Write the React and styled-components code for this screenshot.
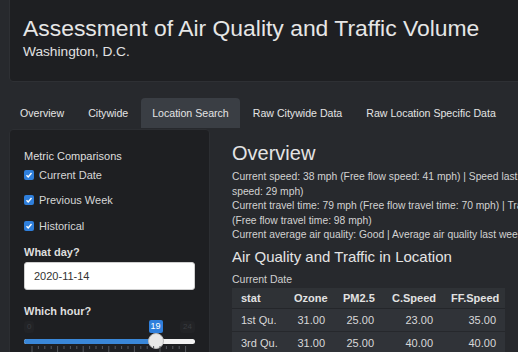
import styled, { createGlobalStyle } from "styled-components";

const GlobalStyle = createGlobalStyle`
  html, body {
    margin: 0;
    padding: 0;
    background: #27292d;
    overflow: hidden;
  }
  body {
    font-family: "Liberation Sans", Arial, sans-serif;
    color: #dcdcdc;
  }
`;

const Page = styled.div`
  width: 760px;
  padding: 0 0 0 9px;
  box-sizing: border-box;
`;

const Header = styled.header`
  margin-top: -4px;
  height: 86px;
  box-sizing: border-box;
  padding: 18px 13px 0;
  background: #1e1f22;
  border: 1px solid #2e3034;
  border-radius: 4px;
`;

const Title = styled.h1`
  margin: 0;
  font-size: 22.9px;
  font-weight: 400;
  line-height: 26px;
  color: #e6e6e6;
`;

const Subtitle = styled.div`
  margin-top: 3px;
  font-size: 13.7px;
  line-height: 16px;
  color: #e2e2e2;
`;

const Tabs = styled.nav`
  display: flex;
  margin-top: 16px;
  height: 30px;
`;

const Tab = styled.div`
  display: flex;
  align-items: center;
  padding: 0 11px;
  margin-right: 2px;
  font-size: 10.6px;
  color: #e4e4e4;
  border-radius: 4px 4px 0 0;
  background: ${(p) => (p.$active ? "#3a3e44" : "transparent")};
`;

const Body = styled.div`
  display: flex;
  margin-top: 1px;
`;

const Sidebar = styled.aside`
  width: 201px;
  flex: none;
  height: 240px;
  box-sizing: border-box;
  padding: 19px 14px 0 14px;
  background: #1e1f22;
  border: 1px solid #2c2e32;
  border-radius: 4px;
`;

const SideLabel = styled.div`
  font-size: 11px;
  line-height: 14px;
  color: #dedede;
  font-weight: ${(p) => (p.$bold ? 700 : 400)};
  margin-top: ${(p) => p.$mt || 0}px;
`;

const CheckRow = styled.div`
  display: flex;
  align-items: center;
  gap: 5px;
  height: 14px;
  margin-top: ${(p) => p.$mt}px;
  font-size: 11px;
  color: #d6d6d6;
`;

const Box = styled.span`
  width: 10px;
  height: 10px;
  border-radius: 2px;
  background: #2f7fdc;
  display: flex;
  align-items: center;
  justify-content: center;
`;

const DateInput = styled.div`
  margin-top: 3px;
  height: 28px;
  box-sizing: border-box;
  padding: 0 9px;
  display: flex;
  align-items: center;
  background: #fff;
  border: 1px solid #cfcfcf;
  border-radius: 3px;
  font-size: 11px;
  color: #333;
`;

const Slider = styled.div`
  position: relative;
  margin-top: 0;
  height: 40px;
`;

const EdgeLabel = styled.span`
  position: absolute;
  top: 3px;
  ${(p) => (p.$right ? "right: 0;" : "left: 0;")}
  padding: 1px 3px;
  font-size: 8px;
  line-height: 10px;
  color: #3a3c40;
  background: #222326;
  border-radius: 3px;
`;

const ValueLabel = styled.span`
  position: absolute;
  top: 2px;
  margin-left: -7px;
  padding: 1px 2px;
  font-size: 9px;
  line-height: 11px;
  color: #fff;
  background: #2f7fdc;
  border-radius: 2px;
`;

const Track = styled.div`
  position: absolute;
  top: 21px;
  left: 0;
  right: 0;
  height: 5px;
  border-radius: 3px;
  background: #f2f2f2;
`;

const Fill = styled.div`
  height: 100%;
  border-radius: 3px 0 0 3px;
  background: #3a87d8;
`;

const Thumb = styled.div`
  position: absolute;
  top: 15px;
  width: 16px;
  height: 16px;
  margin-left: -8px;
  border-radius: 50%;
  background: #e8e8e8;
  border: 1px solid #bdbdbd;
  box-sizing: border-box;
`;

const Ticks = styled.svg`
  position: absolute;
  top: 28px;
  left: 0;
`;

const Main = styled.main`
  flex: 1;
  padding: 11px 0 0 22px;
`;

const H2 = styled.h2`
  margin: 0;
  font-size: 20px;
  font-weight: 400;
  line-height: 26px;
  color: #e4e4e4;
`;

const Para = styled.p`
  margin: 4px 0 0;
  width: 420px;
  font-size: 10.3px;
  line-height: 14.5px;
  color: #d2d2d2;
`;

const H3 = styled.h3`
  margin: 4px 0 0;
  font-size: 15px;
  font-weight: 400;
  line-height: 20px;
  color: #e4e4e4;
`;

const Caption = styled.div`
  margin-top: 5px;
  font-size: 10.5px;
  line-height: 14px;
  color: #cfcfcf;
`;

const Table = styled.table`
  margin-top: 2px;
  width: 273px;
  table-layout: fixed;
  border-collapse: collapse;
  font-size: 11px;
  color: #d8d8d8;
  white-space: nowrap;
`;

const Th = styled.th`
  box-sizing: border-box;
  width: ${(p) => p.$w}px;
  height: 21px;
  padding: 0 9px;
  background: #2f3236;
  font-weight: 700;
  text-align: ${(p) => (p.$left ? "left" : "right")};
  border-bottom: 1px solid #24262a;
  color: #e2e2e2;
`;

const Td = styled.td`
  height: 22px;
  padding: 0 9px;
  background: #303338;
  text-align: ${(p) => (p.$left ? "left" : "right")};
  border-bottom: 1px solid #26282c;
`;

const Check = () => (
  <Box>
    <svg width="8" height="8" viewBox="0 0 8 8">
      <path d="M1.5 4.2 L3.2 5.9 L6.5 2" stroke="#fff" strokeWidth="1.4" fill="none" />
    </svg>
  </Box>
);

const columns = [
  ["stat", 53],
  ["Ozone", 49],
  ["PM2.5", 49],
  ["C.Speed", 59],
  ["FF.Speed", 63],
];

const rows = [
  ["1st Qu.", "31.00", "25.00", "23.00", "35.00"],
  ["3rd Qu.", "31.00", "25.00", "40.00", "40.00"],
];

const tickXs = Array.from({ length: 25 }, (_, i) => 8 + i * 6.4);

// handle travels inside the track, minus its own width
const hour = 19;
const handleX = 8 + (hour / 24) * (172 - 16);

export default function App() {
  return (
    <>
      <GlobalStyle />
      <Page>
        <Header>
          <Title>Assessment of Air Quality and Traffic Volume</Title>
          <Subtitle>Washington, D.C.</Subtitle>
        </Header>
        <Tabs>
          <Tab>Overview</Tab>
          <Tab>Citywide</Tab>
          <Tab $active>Location Search</Tab>
          <Tab>Raw Citywide Data</Tab>
          <Tab>Raw Location Specific Data</Tab>
        </Tabs>
        <Body>
          <Sidebar>
            <SideLabel>Metric Comparisons</SideLabel>
            <CheckRow $mt={5}><Check />Current Date</CheckRow>
            <CheckRow $mt={11}><Check />Previous Week</CheckRow>
            <CheckRow $mt={12}><Check />Historical</CheckRow>
            <SideLabel $bold $mt={12}>What day?</SideLabel>
            <DateInput>2020-11-14</DateInput>
            <SideLabel $bold $mt={14}>Which hour?</SideLabel>
            <Slider>
              <EdgeLabel>0</EdgeLabel>
              <EdgeLabel $right>24</EdgeLabel>
              <ValueLabel style={{ left: handleX }}>{hour}</ValueLabel>
              <Track>
                <Fill style={{ width: handleX }} />
              </Track>
              <Thumb style={{ left: handleX }} />
              <Ticks width="172" height="10">
                {tickXs.map((x, i) => (
                  <line key={i} x1={x} x2={x} y1="0" y2={i % 4 === 0 ? 6 : 3} stroke="#55585d" strokeWidth="1" />
                ))}
              </Ticks>
            </Slider>
          </Sidebar>
          <Main>
            <H2>Overview</H2>
            <Para>
              Current speed: 38 mph (Free flow speed: 41 mph) | Speed last week: 31 mph (Free flow speed: 29 mph)
              <br />
              Current travel time: 79 mph (Free flow travel time: 70 mph) | Travel time last week: 88 mph (Free flow travel time: 98 mph)
              <br />
              Current average air quality: Good | Average air quality last week: Good
            </Para>
            <H3>Air Quality and Traffic in Location</H3>
            <Caption>Current Date</Caption>
            <Table>
              <thead>
                <tr>
                  {columns.map(([name, w], i) => (
                    <Th key={name} $w={w} $left={i === 0}>{name}</Th>
                  ))}
                </tr>
              </thead>
              <tbody>
                {rows.map((r) => (
                  <tr key={r[0]}>
                    {r.map((c, i) => (
                      <Td key={i} $left={i === 0}>{c}</Td>
                    ))}
                  </tr>
                ))}
              </tbody>
            </Table>
          </Main>
        </Body>
      </Page>
    </>
  );
}
